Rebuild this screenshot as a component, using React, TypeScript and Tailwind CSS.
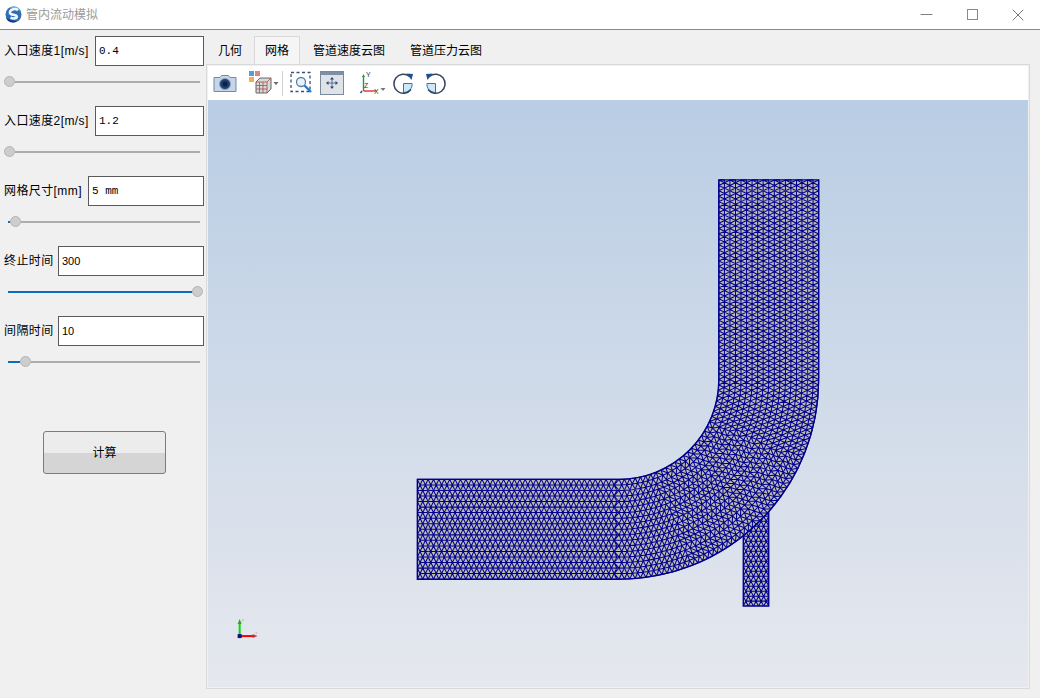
import { Minus, X } from 'lucide-react'

const cjk = '[font-family:"Liberation_Sans","Noto_Sans_CJK_SC",sans-serif]'

const params = [
  { label: '入口速度1[m/s]', value: '0.4', mono: true, fill: 0, inputW: 'w-[109px]', track: 'ml-[4px]' },
  { label: '入口速度2[m/s]', value: '1.2', mono: true, fill: 0, inputW: 'w-[109px]', track: 'ml-[4px]' },
  { label: '网格尺寸[mm]', value: '5 mm', mono: true, fill: 2, inputW: 'w-[116px]', track: 'ml-[8px]' },
  { label: '终止时间', value: '300', mono: false, fill: 184, inputW: 'w-[146px]', track: 'ml-[8px]' },
  { label: '间隔时间', value: '10', mono: false, fill: 12, inputW: 'w-[146px]', track: 'ml-[8px]' },
]

const tabs = [
  { label: '几何', w: 'w-[48px]' },
  { label: '网格', w: 'w-[46px]' },
  { label: '管道速度云图', w: 'w-[98px]' },
  { label: '管道压力云图', w: 'w-[96px]' },
]

const STRAIGHT_IN = 202
const STRAIGHT_OUT = 200
const BEND_MID = (150 * Math.PI) / 2
const CELL = 5.4

// p is progress along the centreline, t the offset across the pipe
function pipePoint(p: number, t: number) {
  if (p <= STRAIGHT_IN) return [417 + p, 530 - t]
  if (p <= STRAIGHT_IN + BEND_MID) {
    const a = (p - STRAIGHT_IN) / 150
    const r = 150 - t
    return [619 + r * Math.sin(a), 380 + r * Math.cos(a)]
  }
  return [769 - t, 380 - (p - STRAIGHT_IN - BEND_MID)]
}

// nodes of one lengthwise track, evenly spaced in real length on each section
function trackNodes(t: number, odd: boolean) {
  const nodes: number[] = []
  const offset = odd ? CELL / 2 : 0
  for (let p = odd ? offset : 0; p < STRAIGHT_IN; p += CELL) nodes.push(p)
  const r = 150 - t
  const n = Math.round((r * Math.PI) / 2 / CELL)
  for (let k = 0; k < n; k++) nodes.push(STRAIGHT_IN + (BEND_MID * (k + (odd ? 0.5 : 0))) / n)
  const end = STRAIGHT_IN + BEND_MID
  for (let p = end + offset; p < end + STRAIGHT_OUT; p += CELL) nodes.push(p)
  nodes.push(end + STRAIGHT_OUT)
  return nodes
}

function buildPipeMesh() {
  const cols = 18
  const xy = (p: number, t: number) => pipePoint(p, t).map((n) => n.toFixed(1)).join(' ')
  const tracks = Array.from({ length: cols + 1 }, (_, i) => {
    const t = -50 + (100 / cols) * i
    return { t, nodes: trackNodes(t, i % 2 === 1) }
  })
  let d = ''
  tracks.forEach(({ t, nodes }) => {
    nodes.forEach((p, k) => {
      d += `${k === 0 ? 'M' : 'L'}${xy(p, t)}`
    })
  })
  // zip neighbouring tracks into triangles
  for (let i = 0; i < cols; i++) {
    const a = tracks[i]
    const b = tracks[i + 1]
    let x = 0
    let y = 0
    while (x < a.nodes.length - 1 || y < b.nodes.length - 1) {
      d += `M${xy(a.nodes[x], a.t)}L${xy(b.nodes[y], b.t)}`
      const nextA = x < a.nodes.length - 1 ? a.nodes[x + 1] : Infinity
      const nextB = y < b.nodes.length - 1 ? b.nodes[y + 1] : Infinity
      if (nextA <= nextB) x++
      else y++
    }
  }
  return d
}

function buildBranchMesh() {
  const x0 = 743.5
  const w = 25.5
  const cols = 5
  let d = ''
  const rows = 20
  const top = 507
  const step = (607 - top) / rows
  const px = (i: number, j: number) => {
    const x = x0 + (w / cols) * (i + (j % 2 ? 0.5 : 0))
    return `${Math.min(x, x0 + w).toFixed(1)} ${(top + j * step).toFixed(1)}`
  }
  for (let j = 0; j <= rows; j++) {
    for (let i = 0; i <= cols; i++) {
      if (i < cols) d += `M${px(i, j)}L${px(i + 1, j)}`
      if (j < rows) {
        d += `M${px(i, j)}L${px(i, j + 1)}`
        if (j % 2 === 0 && i > 0) d += `M${px(i, j)}L${px(i - 1, j + 1)}`
        if (j % 2 === 1 && i < cols) d += `M${px(i, j)}L${px(i + 1, j + 1)}`
      }
    }
  }
  return d
}

const pipeOutline = 'M417 480H619A100 100 0 0 0 719 380V180H819V380A200 200 0 0 1 619 580H417Z'
const branchShape = 'M743.5 536.500L769 512V607H743.5Z'
const branchEdge = 'M743.5 536.500V607H769V512'
// nested bands the paved mesh shows near both pipe ends
const rings =
  'M640 490H428V570H640M630 500H438V560H630M620 510H448V550H620M729 370V191H808V390M739 360V201H798V380M749 350V211H788V360'

function MeshView() {
  return (
    <svg viewBox="208 100 820 588" className="block h-full w-full">
      <defs>
        <clipPath id="branch-clip">
          <path d={branchShape} />
        </clipPath>
      </defs>
      <path d={pipeOutline} fill="#bdbcb4" />
      <path d={branchShape} fill="#bdbcb4" />
      <path d={buildPipeMesh()} fill="none" stroke="#00008f" strokeWidth="1.05" />
      <path d={buildBranchMesh()} clipPath="url(#branch-clip)" fill="none" stroke="#00008f" strokeWidth="1.05" />
      <path d={rings} fill="none" stroke="#7d7db0" strokeOpacity="0.3" strokeWidth="1.6" />
      <path d={pipeOutline} fill="none" stroke="#00008f" strokeWidth="1.4" />
      <path d={branchEdge} fill="none" stroke="#00008f" strokeWidth="1.4" />
      {/* axes triad */}
      <path d="M239 637V624" stroke="#00e000" strokeWidth="2" />
      <path d="M237 625L239 620L241 625Z" fill="#30a030" />
      <path d="M239 637H253" stroke="#f00000" strokeWidth="2" />
      <path d="M252 635L257 637L252 639Z" fill="#b04040" />
      <rect x="237" y="635" width="4" height="4" fill="#101080" />
      <text x="241" y="622" fontSize="4" fill="#90c090">y</text>
      <text x="255" y="635" fontSize="4" fill="#e09090">x</text>
    </svg>
  )
}

function Logo() {
  return (
    <svg width="17" height="17" viewBox="0 0 17 17">
      <circle cx="8.5" cy="8.5" r="8" fill="#2f6db5" />
      <path d="M16 5A8 8 0 0 0 8.500.5C6 .5 5 2 5 2z" fill="#63b3e0" />
      <path d="M1 12a8 8 0 0 0 7.500 4.500c2 0 3-1 3-1z" fill="#123f86" />
      <path d="M13 4C9.500 2 4.500 3.500 5 7c.4 2.400 6.500 1.300 6.800 3.600.2 1.500-3 2.700-6.300 1.200" fill="none" stroke="#f2f6fa" strokeWidth="2.600" />
    </svg>
  )
}

function CameraIcon() {
  return (
    <svg width="24" height="20" viewBox="0 0 24 20">
      <path d="M1 4.500h6l1.500-2h7l1.500 2h6v14H1z" fill="#c6d6e8" stroke="#6b8cae" />
      <circle cx="12" cy="11" r="5.500" fill="#1f3f6f" stroke="#8aa4c0" />
      <circle cx="12" cy="11" r="2.500" fill="#0d2344" />
    </svg>
  )
}

function MeshCubeIcon() {
  return (
    <svg width="31" height="24" viewBox="0 0 31 24">
      <rect x="0" y="0" width="5" height="5" fill="#5b9bd5" />
      <rect x="6" y="0" width="5" height="5" fill="#d98880" />
      <rect x="0" y="6" width="5" height="5" fill="#f0b050" />
      <path d="M7 11l4-4h11v11l-4 4H7z" fill="#d8d8d8" stroke="#666" />
      <path d="M7 11h11v11M18 11l4-4M10.500 11v11M14 11v11M7 14.500h11M7 18h11" fill="none" stroke="#a04040" strokeWidth="0.7" />
      <path d="M24.500 11h5l-2.500 3z" fill="#666" />
    </svg>
  )
}

function ZoomBoxIcon() {
  return (
    <svg width="23" height="24" viewBox="0 0 23 24">
      <rect x="1" y="1.500" width="19" height="19" fill="none" stroke="#33507a" strokeWidth="1.300" strokeDasharray="3 2.500" />
      <circle cx="11" cy="11" r="4.500" fill="#e8f2fb" stroke="#5b7fa6" strokeWidth="1.300" />
      <path d="M14.500 14.500L21 21" stroke="#2a78c8" strokeWidth="2.400" />
    </svg>
  )
}

function FitIcon() {
  return (
    <svg width="24" height="24" viewBox="0 0 24 24">
      <rect x="0.500" y="0.500" width="23" height="23" fill="#dfe3e8" stroke="#7d8a9a" />
      <rect x="1" y="1" width="22" height="3" fill="#7d8fa6" />
      <path d="M12 7v10M7 12h10" stroke="#52708f" strokeWidth="1" />
      <path d="M12 6l-2 2.500h4zM12 18l-2-2.500h4zM6 12l2.500-2v4zM18 12l-2.500-2v4z" fill="#2a4a78" />
    </svg>
  )
}

function AxesIcon() {
  return (
    <svg width="27" height="24" viewBox="0 0 27 24">
      <path d="M4.500 20V5" stroke="#1f9a3a" strokeWidth="1.400" />
      <path d="M4.500 20H17" stroke="#e03030" strokeWidth="1.400" />
      <path d="M3 6l1.500-3L6 6z" fill="#1f9a3a" />
      <path d="M3 20l-1.500 2" stroke="#2040c0" strokeWidth="1.400" />
      <text x="7" y="6" fontSize="7" fill="#333" fontFamily="Liberation Sans">Y</text>
      <text x="5" y="17" fontSize="7" fill="#333" fontFamily="Liberation Sans">Z</text>
      <text x="15" y="23" fontSize="7" fill="#333" fontFamily="Liberation Sans">X</text>
      <path d="M21.500 17h5l-2.500 3z" fill="#777" />
    </svg>
  )
}

function RotateIcon({ flip }: { flip?: boolean }) {
  return (
    <svg width="23" height="23" viewBox="0 0 23 23" className={flip ? '-scale-x-100' : ''}>
      <path d="M11.500 11.500H20V14A9 9 0 0 1 11.500 20.500z" fill="#cfe8f8" stroke="#2a78b8" />
      <path d="M17.500 4.500A9.500 9.500 0 1 0 19 17.500" fill="none" stroke="#33475f" strokeWidth="1.500" />
      <path d="M14.500 1.500l6.500.5-1.500 6z" fill="#1f4f8f" />
    </svg>
  )
}

function ParamRow({ label, value, mono, fill, inputW, track }: (typeof params)[number]) {
  return (
    <div className="h-[70px]">
      <div className="flex h-[30px] items-center justify-between pr-[2px]">
        <span className="whitespace-nowrap pl-1 text-[12px] leading-none tracking-[0.4px] text-black">{label}</span>
        <input
          readOnly
          value={value}
          className={`${inputW} h-[30px] border border-[#5a5a5a] bg-white pl-[3px] text-[11px] text-black outline-none ${
            mono ? '[font-family:"Liberation_Mono",monospace]' : '[font-family:"Liberation_Sans",sans-serif]'
          }`}
        />
      </div>
      <div className={`${track} mt-[10px] mr-[3px] flex h-[11px] items-center`}>
        {fill > 0 && <div className="h-[2px] bg-[#0f6cbd]" style={{ width: fill }} />}
        <div className="h-[11px] w-[11px] shrink-0 rounded-full border border-[#b4b4b4] bg-[#cdcdcd]" />
        {fill < 100 && <div className="mr-[3px] h-[2px] flex-1 bg-[#adadad]" />}
      </div>
    </div>
  )
}

export default function App() {
  return (
    <div className={`flex h-[698px] w-[1040px] flex-col overflow-hidden bg-[#f0f0f0] ${cjk}`}>
      <header className="flex h-[30px] shrink-0 items-center border-b border-[#8a8a8a] bg-white">
        <div className="ml-[5px] flex items-center gap-[4px]">
          <Logo />
          <span className="text-[12px] text-[#9a9a9a]">管内流动模拟</span>
        </div>
        <div className="ml-auto -mr-px flex items-center text-[#7a7a7a]">
          <div className="flex w-[46px] justify-center"><Minus size={19} strokeWidth={1.2} /></div>
          <div className="flex w-[46px] justify-center"><div className="h-[11px] w-[11px] border border-[#8a8a8a]" /></div>
          <div className="flex w-[46px] justify-center"><X size={20} strokeWidth={1.2} /></div>
        </div>
      </header>

      <div className="flex min-h-0 flex-1 pr-[10px] pb-[9px]">
        <aside className="w-[206px] shrink-0 pt-[6px]">
          {params.map((p) => (
            <ParamRow key={p.label} {...p} />
          ))}
          <div className="mt-[45px] pl-[43px]">
            <button className="flex h-[43px] w-[123px] items-center justify-center rounded-[3px] border border-[#7c7c7c] bg-[linear-gradient(#ececec_50%,#d5d5d5_50%)] text-[12px] text-black">
              计算
            </button>
          </div>
        </aside>

        <main className="flex min-w-0 flex-1 flex-col">
          <nav className="flex h-[34px] shrink-0 items-end">
            {tabs.map((t, i) => (
              <div
                key={t.label}
                className={`flex h-[28px] items-center justify-center pt-px text-[12px] leading-none text-black ${t.w} ${
                  i === 1 ? 'border border-b-0 border-[#d9d9d9] bg-[#f5f5f5]' : ''
                }`}
              >
                {t.label}
              </div>
            ))}
          </nav>
          <section className="flex min-h-0 flex-1 flex-col border border-[#d9d9d9] p-px">
            <div className="flex h-[34px] shrink-0 items-center bg-white pl-[5px]">
              <CameraIcon />
              <div className="ml-[12px]"><MeshCubeIcon /></div>
              <div className="ml-[2px] mr-[7px] h-[25px] w-px bg-[#d0d0d0]" />
              <ZoomBoxIcon />
              <div className="ml-[7px]"><FitIcon /></div>
              <div className="ml-[15px]"><AxesIcon /></div>
              <div className="ml-[6px]"><RotateIcon /></div>
              <div className="ml-[9px]"><RotateIcon flip /></div>
            </div>
            <div className="min-h-0 flex-1 bg-[linear-gradient(#b9cde4,#e6e8ee)]">
              <MeshView />
            </div>
          </section>
        </main>
      </div>
    </div>
  )
}
